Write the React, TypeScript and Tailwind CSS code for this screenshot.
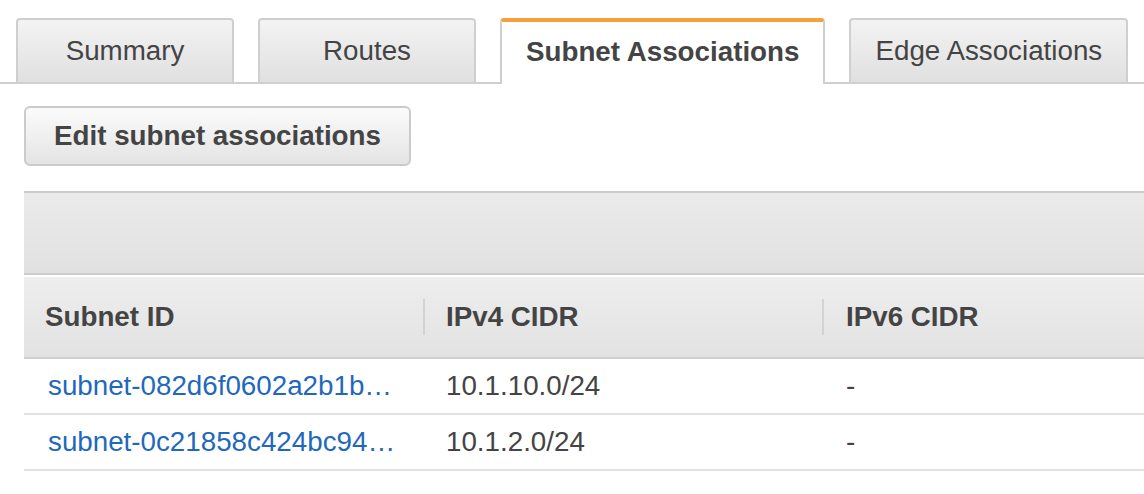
import React from "react";

const font = { fontFamily: '"Liberation Sans", Arial, Helvetica, sans-serif' };

function Tab({ label, active }: { label: string; active?: boolean }) {
  if (active) {
    return (
      <div className="-mb-[2px] flex h-[66px] min-w-[218px] items-center justify-center rounded-t-[4px] border-x-2 border-t-4 border-x-[#cfcfcf] border-t-[#f5a03a] bg-white px-[24px] pb-[2px] text-[27.75px] font-bold text-[#444]">
        {label}
      </div>
    );
  }
  return (
    <div className="-mb-[2px] flex h-[66px] min-w-[218px] items-center justify-center rounded-t-[4px] border-2 border-[#cfcfcf] bg-gradient-to-b from-[#f3f3f3] to-[#e0e0e0] px-[24px] text-[27.75px] text-[#444]">
      {label}
    </div>
  );
}

const rows = [
  { id: "subnet-082d6f0602a2b1b…", v4: "10.1.10.0/24", v6: "-" },
  { id: "subnet-0c21858c424bc94…", v4: "10.1.2.0/24", v6: "-" },
];

export default function App() {
  return (
    <div className="h-[494px] w-[1144px] overflow-hidden bg-white" style={font}>
      <div className="flex gap-[24px] border-b-2 border-[#cfcfcf] pl-[16px] pt-[18px]">
        <Tab label="Summary" />
        <Tab label="Routes" />
        <Tab label="Subnet Associations" active />
        <Tab label="Edge Associations" />
      </div>

      <div className="pl-[24px] pt-[22px]">
        <button className="flex h-[60px] w-[387px] items-center justify-center rounded-[6px] border-2 border-[#cbcbcb] bg-gradient-to-b from-[#fbfbfb] to-[#e4e4e4] text-[27.75px] font-bold text-[#444]">
          Edit subnet associations
        </button>
      </div>

      <div className="ml-[24px] mt-[25px] w-[1120px]">
        <div className="h-[84px] border-y-2 border-[#cccccc] bg-gradient-to-b from-[#ebebeb] to-[#e1e1e1]" />
        <div className="h-[2px] bg-white" />
        <div className="flex h-[82px] items-center border-b-2 border-[#cfcfcf] bg-gradient-to-b from-[#eeeeee] to-[#e2e2e2] text-[27.75px] font-bold text-[#444]">
          <div className="flex w-[399px] items-center pl-[21px]">Subnet ID</div>
          <div className="h-[36px] w-[2px] bg-[#d3d3d3]" />
          <div className="flex w-[397px] items-center pl-[21px]">IPv4 CIDR</div>
          <div className="h-[36px] w-[2px] bg-[#d3d3d3]" />
          <div className="flex flex-1 items-center pl-[22px]">IPv6 CIDR</div>
        </div>
        {rows.map((r) => (
          <div key={r.id} className="flex h-[56px] items-center border-b-2 border-[#e2e2e2] text-[27.75px] text-[#444]">
            <div className="w-[399px] whitespace-nowrap pl-[24px] text-[#1f68bd]">{r.id}</div>
            <div className="w-[399px] whitespace-nowrap pl-[23px]">{r.v4}</div>
            <div className="flex-1 whitespace-nowrap pl-[24px]">{r.v6}</div>
          </div>
        ))}
      </div>
    </div>
  );
}
